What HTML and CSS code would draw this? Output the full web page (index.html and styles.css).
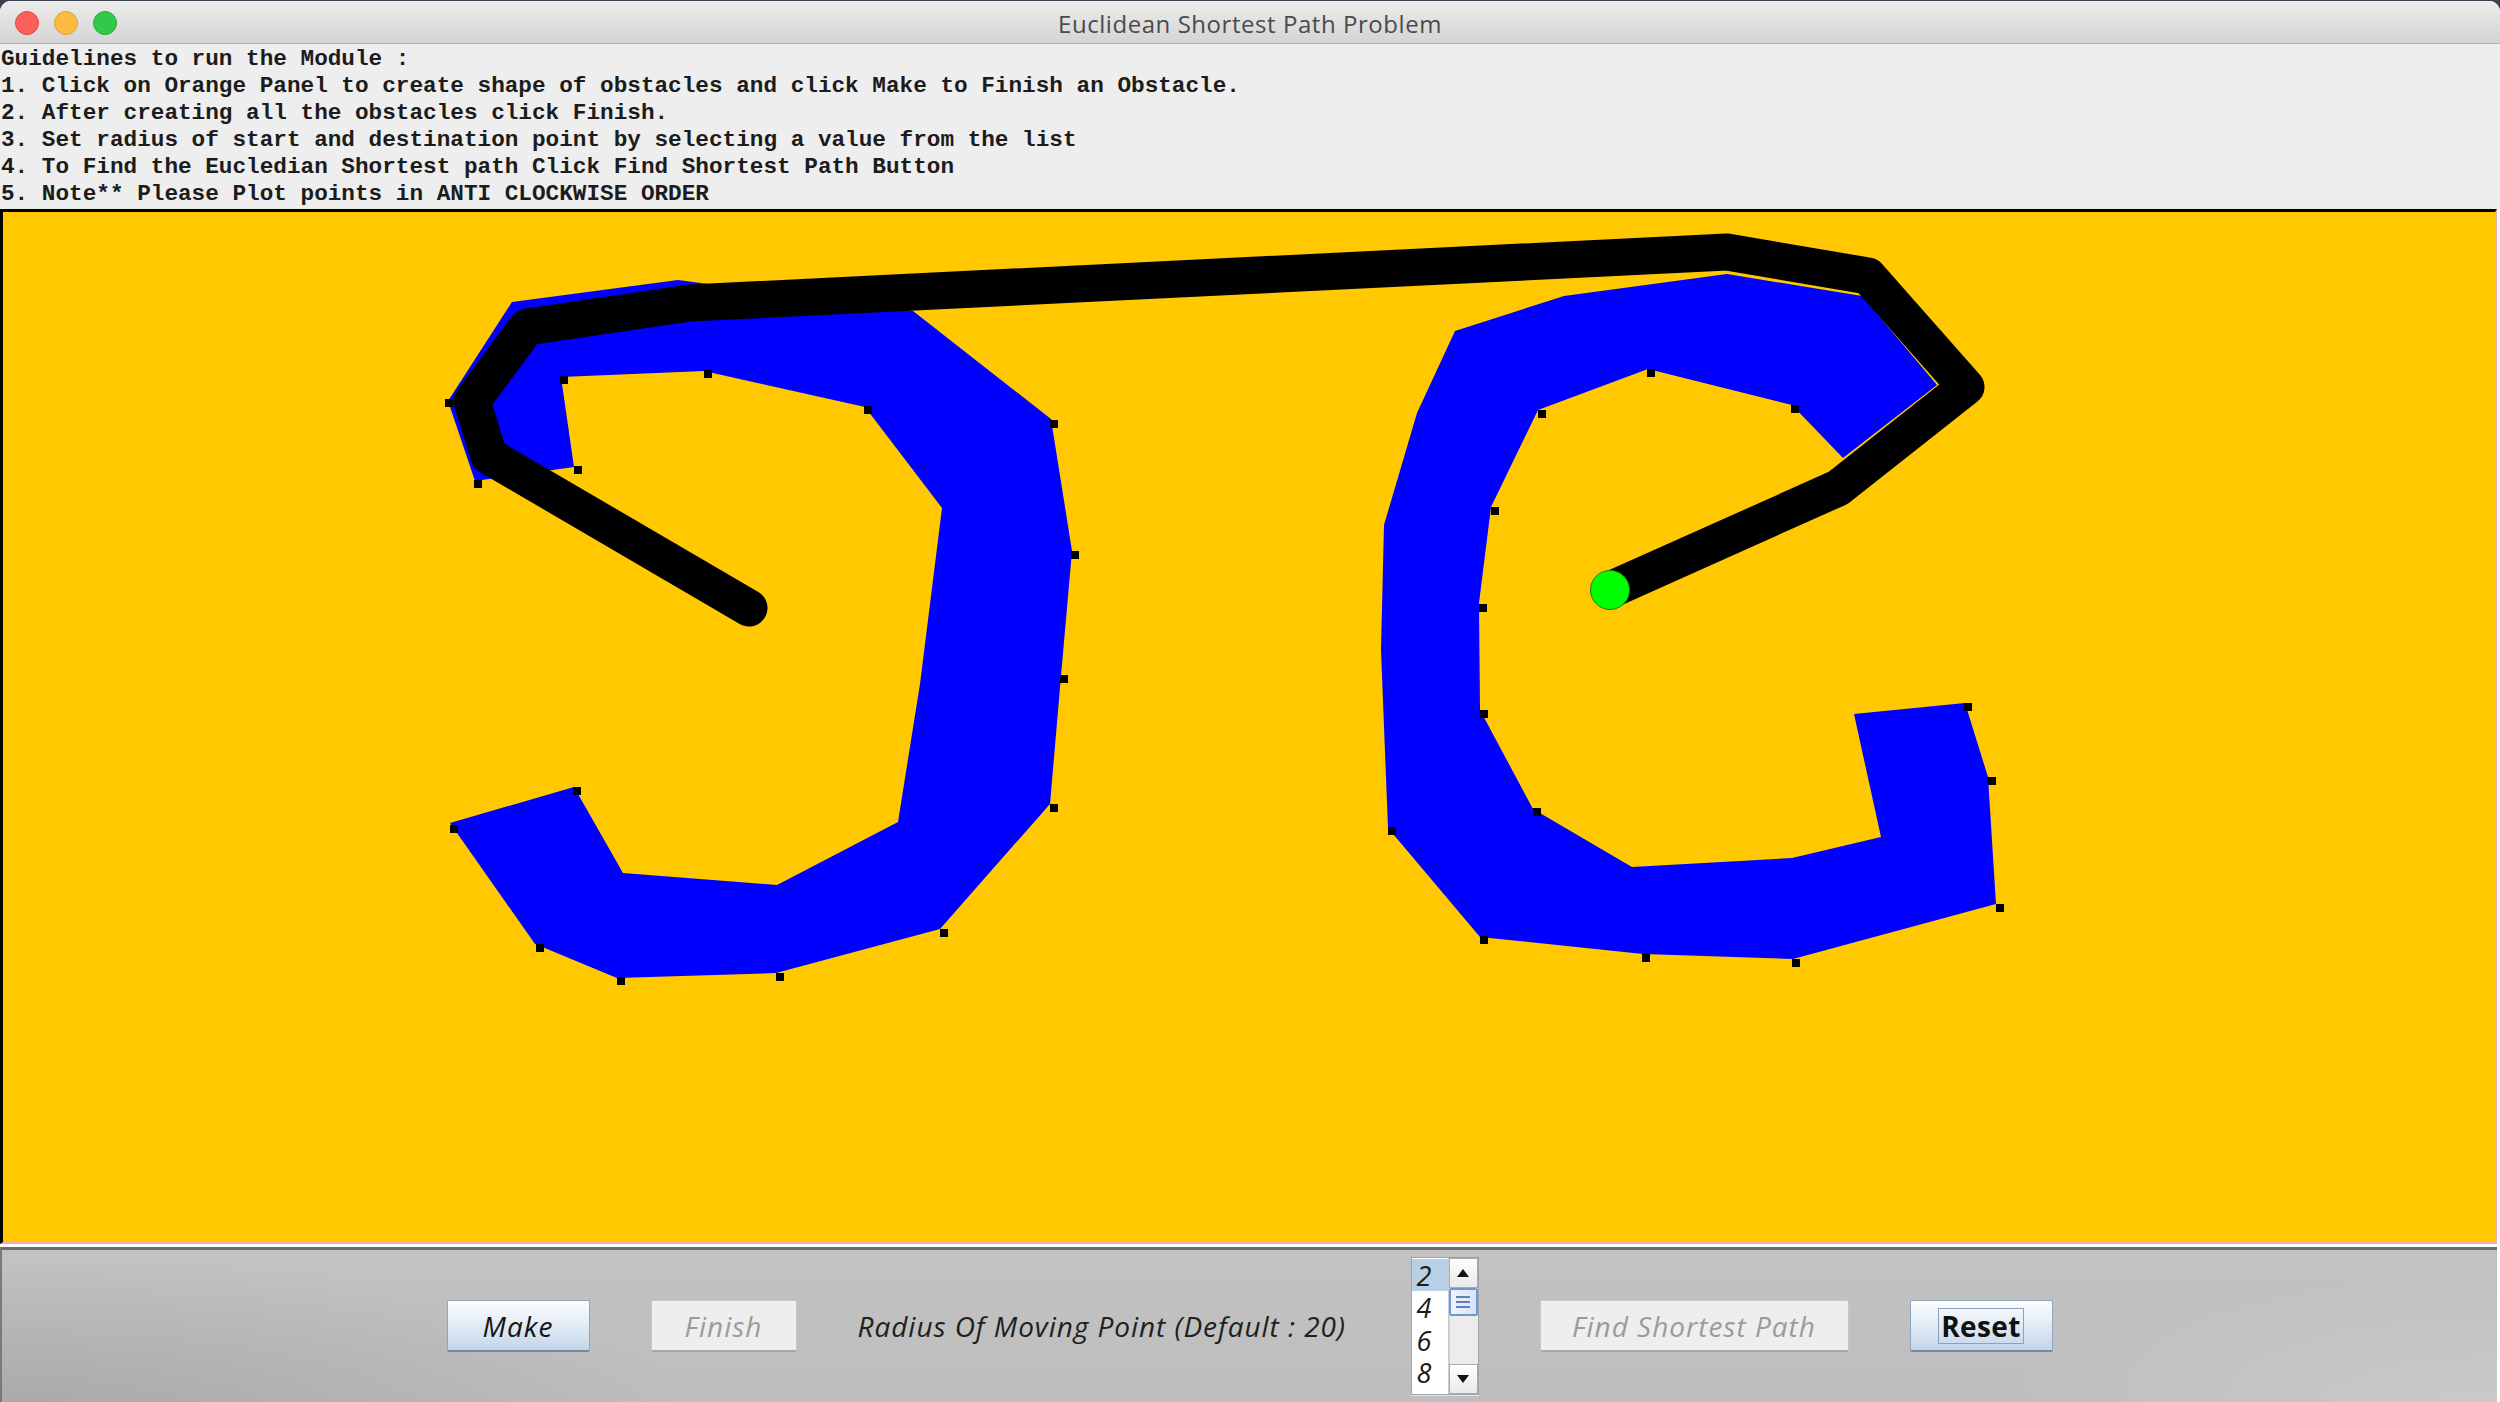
FILE: index.html
```html
<!DOCTYPE html>
<html>
<head>
<meta charset="utf-8">
<title>Euclidean Shortest Path Problem</title>
<link rel="stylesheet" href="styles.css">
</head>
<body>
<div class="window">
  <div class="titlebar">
    <div class="lights">
      <span class="light red"></span>
      <span class="light yellow"></span>
      <span class="light green"></span>
    </div>
    <div class="title">Euclidean Shortest Path Problem</div>
    <div></div>
  </div>
  <div class="guide">
    <div class="gl">Guidelines to run the Module :</div>
    <div class="gl">1. Click on Orange Panel to create shape of obstacles and click Make to Finish an Obstacle.</div>
    <div class="gl">2. After creating all the obstacles click Finish.</div>
    <div class="gl">3. Set radius of start and destination point by selecting a value from the list</div>
    <div class="gl">4. To Find the Eucledian Shortest path Click Find Shortest Path Button</div>
    <div class="gl">5. Note** Please Plot points in ANTI CLOCKWISE ORDER</div>
  </div>
  <div class="canvas">
    <svg class="board" viewBox="3 212 2492 1030" width="2492" height="1030">
      <polygon class="obst" points="448,401 512,302 678,280 913,311 1051,419 1072,551 1061,676 1050,804 940,929 776,973 617,978 535,944 450,823 574,787 623,873 777,885 898,822 920,684 942,508 865,407 704,371 561,377 574,467 475,481"/>
      <polygon class="obst" points="1388,828 1381,650 1384,525 1417,413 1455,331 1564,296 1727,274 1862,296 1937,385 1843,458 1792,405 1648,369 1538,410 1491,507 1479,603 1480,710 1533,809 1632,867 1792,858 1881,837 1854,714 1965,703 1988,777 1996,904 1793,959 1643,954 1480,937"/>
      <g class="marks">
        <rect x="445" y="399" width="8" height="8"/>
        <rect x="474" y="480" width="8" height="8"/>
        <rect x="574" y="466" width="8" height="8"/>
        <rect x="560" y="376" width="8" height="8"/>
        <rect x="704" y="370" width="8" height="8"/>
        <rect x="864" y="406" width="8" height="8"/>
        <rect x="1050" y="420" width="8" height="8"/>
        <rect x="1071" y="551" width="8" height="8"/>
        <rect x="1060" y="675" width="8" height="8"/>
        <rect x="1050" y="804" width="8" height="8"/>
        <rect x="940" y="929" width="8" height="8"/>
        <rect x="776" y="973" width="8" height="8"/>
        <rect x="617" y="977" width="8" height="8"/>
        <rect x="536" y="944" width="8" height="8"/>
        <rect x="450" y="825" width="8" height="8"/>
        <rect x="573" y="787" width="8" height="8"/>
        <rect x="1538" y="410" width="8" height="8"/>
        <rect x="1647" y="369" width="8" height="8"/>
        <rect x="1791" y="405" width="8" height="8"/>
        <rect x="1491" y="507" width="8" height="8"/>
        <rect x="1479" y="604" width="8" height="8"/>
        <rect x="1480" y="710" width="8" height="8"/>
        <rect x="1533" y="808" width="8" height="8"/>
        <rect x="1388" y="827" width="8" height="8"/>
        <rect x="1480" y="936" width="8" height="8"/>
        <rect x="1642" y="954" width="8" height="8"/>
        <rect x="1792" y="959" width="8" height="8"/>
        <rect x="1996" y="904" width="8" height="8"/>
        <rect x="1988" y="777" width="8" height="8"/>
        <rect x="1964" y="703" width="8" height="8"/>
      </g>
      <polyline class="route" points="749,608 489,456 472,401 527,327 690,303 1727,252 1868,276 1966,387 1838,488 1610,590"/>
      <circle class="target" cx="1610" cy="590" r="19.5"/>
    </svg>
  </div>
  <div class="controls">
    <button class="btn active make">Make</button>
    <button class="btn disabled finish">Finish</button>
    <span class="label">Radius Of Moving Point (Default : 20)</span>
    <div class="list">
      <div class="items">
        <div class="item sel">2</div>
        <div class="item">4</div>
        <div class="item">6</div>
        <div class="item">8</div>
      </div>
      <div class="sbar">
        <div class="sbtn"><svg width="12" height="8" viewBox="0 0 12 8"><polygon points="6,0 12,8 0,8"/></svg></div>
        <div class="thumb"><span></span><span></span><span></span></div>
        <div class="track"></div>
        <div class="sbtn"><svg width="12" height="8" viewBox="0 0 12 8"><polygon points="0,0 12,0 6,8"/></svg></div>
      </div>
    </div>
    <button class="btn disabled find">Find Shortest Path</button>
    <button class="btn active reset"><span class="focus">Reset</span></button>
  </div>
</div>
</body>
</html>
```
FILE: styles.css
```css
* { box-sizing: border-box; margin: 0; padding: 0; }
html, body { width: 2500px; height: 1402px; overflow: hidden; }
body { background: #3b404e; }

.window {
  width: 2500px;
  height: 1401px;
  margin-top: 1px;
  display: flex;
  flex-direction: column;
  background: #ffffff;
  border-radius: 11px 11px 0 0;
  overflow: hidden;
}

.titlebar {
  flex: none;
  height: 43px;
  padding-top: 2px;
  display: grid;
  grid-template-columns: 1fr auto 1fr;
  align-items: center;
  background: linear-gradient(#ececec, #d4d4d4);
  border-bottom: 1px solid #b1b1b1;
}
.lights { display: flex; gap: 15px; padding-left: 15px; }
.light { width: 24px; height: 24px; border-radius: 50%; }
.red { background: #fc605c; border: 1px solid #df4944; }
.yellow { background: #fdbc40; border: 1px solid #dea035; }
.green { background: #34c84a; border: 1px solid #27a938; }
.title {
  font-family: "Open Sans", sans-serif;
  font-size: 24px;
  color: #4b4b4b;
  letter-spacing: 0.55px;
}

.guide {
  flex: none;
  height: 165px;
  background: #eeeeee;
  padding-left: 1px;
  padding-top: 1.6px;
  font-family: "Liberation Mono", monospace;
  font-weight: bold;
  font-size: 22.7px;
  line-height: 27.1px;
  color: #1c1c1c;
}
.gl { white-space: pre; height: 27.1px; }

.canvas {
  flex: none;
  height: 1035px;
  margin-right: 3px;
  margin-bottom: 3px;
  background: #ffc800;
  border-top: 3px solid #000;
  border-left: 3px solid #000;
  border-right: 2px solid #f2a9b4;
  border-bottom: 2px solid #f2a9b4;
}
.board { display: block; }
.obst { fill: #0000ff; }
.marks rect { fill: #000; }
.route {
  fill: none;
  stroke: #000;
  stroke-width: 37;
  stroke-linejoin: round;
  stroke-linecap: round;
}
.target { fill: #00ff00; stroke: #1d7a1d; stroke-width: 1; }

.controls {
  flex: 1;
  margin-right: 3px;
  border-top: 3px solid #6b6b6b;
  border-left: 2px solid #7a7a7a;
  background:
    radial-gradient(ellipse 700px 160px at 0% 110%, rgba(150,150,150,0.55), rgba(150,150,150,0) 100%),
    radial-gradient(ellipse 500px 140px at 100% 110%, rgba(215,215,215,0.5), rgba(215,215,215,0) 100%),
    linear-gradient(#c2c2c2, #bebebe);
  display: flex;
  align-items: center;
  justify-content: center;
  gap: 61px;
}

.btn {
  flex: none;
  height: 52px;
  display: flex;
  align-items: center;
  justify-content: center;
  font-family: "Open Sans", sans-serif;
  font-style: italic;
  font-size: 28px;
  letter-spacing: 1px;
  border-radius: 2px;
}
.btn.active {
  background: linear-gradient(#fcfdfe, #e4edf7 45%, #c3d5ea);
  border: 1px solid #8fa5bf;
  border-bottom: 2px solid #7389a3;
  color: #141414;
}
.btn.disabled {
  background: #eeeeee;
  border: 1px solid #c7c7c7;
  border-bottom: 2px solid #a8a8a8;
  color: #9b9b9b;
}
.make { width: 143px; }
.finish { width: 146px; }
.find { width: 309px; }
.reset { width: 143px; }
.reset .focus {
  font-style: normal;
  font-weight: bold;
  font-family: "Open Sans", sans-serif;
  font-size: 28px;
  letter-spacing: 0.4px;
  height: 36px;
  padding: 0 2px;
  display: flex;
  align-items: center;
  border: 1px solid #8ea3bb;
  color: #111;
}

.label {
  flex: none;
  width: 492px;
  white-space: nowrap;
  font-family: "Open Sans", sans-serif;
  font-style: italic;
  font-size: 28px;
  letter-spacing: 0.95px;
  color: #202020;
}

.list {
  flex: none;
  width: 68px;
  height: 138px;
  display: flex;
  background: #ffffff;
  border: 1px solid #9da4ad;
  box-shadow: 0 1px 0 #e6e6e6;
}
.items { width: 37px; padding-top: 1px; }
.item {
  height: 32.4px;
  padding-left: 5px;
  font-family: "Open Sans", sans-serif;
  font-style: italic;
  font-size: 27px;
  line-height: 34px;
  color: #1a1a1a;
}
.item.sel { background: #b8cfe6; }
.sbar {
  width: 30px;
  display: flex;
  flex-direction: column;
  border-left: 1px solid #c9ced6;
}
.sbtn {
  height: 30px;
  flex: none;
  display: flex;
  align-items: center;
  justify-content: center;
  background: linear-gradient(#ffffff, #e9e9e9);
  border: 1px solid #a9a9a9;
}
.sbtn polygon { fill: #111; }
.thumb {
  height: 28px;
  flex: none;
  display: flex;
  flex-direction: column;
  align-items: center;
  justify-content: center;
  gap: 3px;
  background: linear-gradient(90deg, #eef3fb, #d8e4f4);
  border: 2px solid #7196d0;
  border-radius: 2px;
}
.thumb span { display: block; width: 14px; height: 2px; background: #5b7fbf; }
.track { flex: 1; background: #ececec; border-left: 1px solid #d0d0d0; }
```
